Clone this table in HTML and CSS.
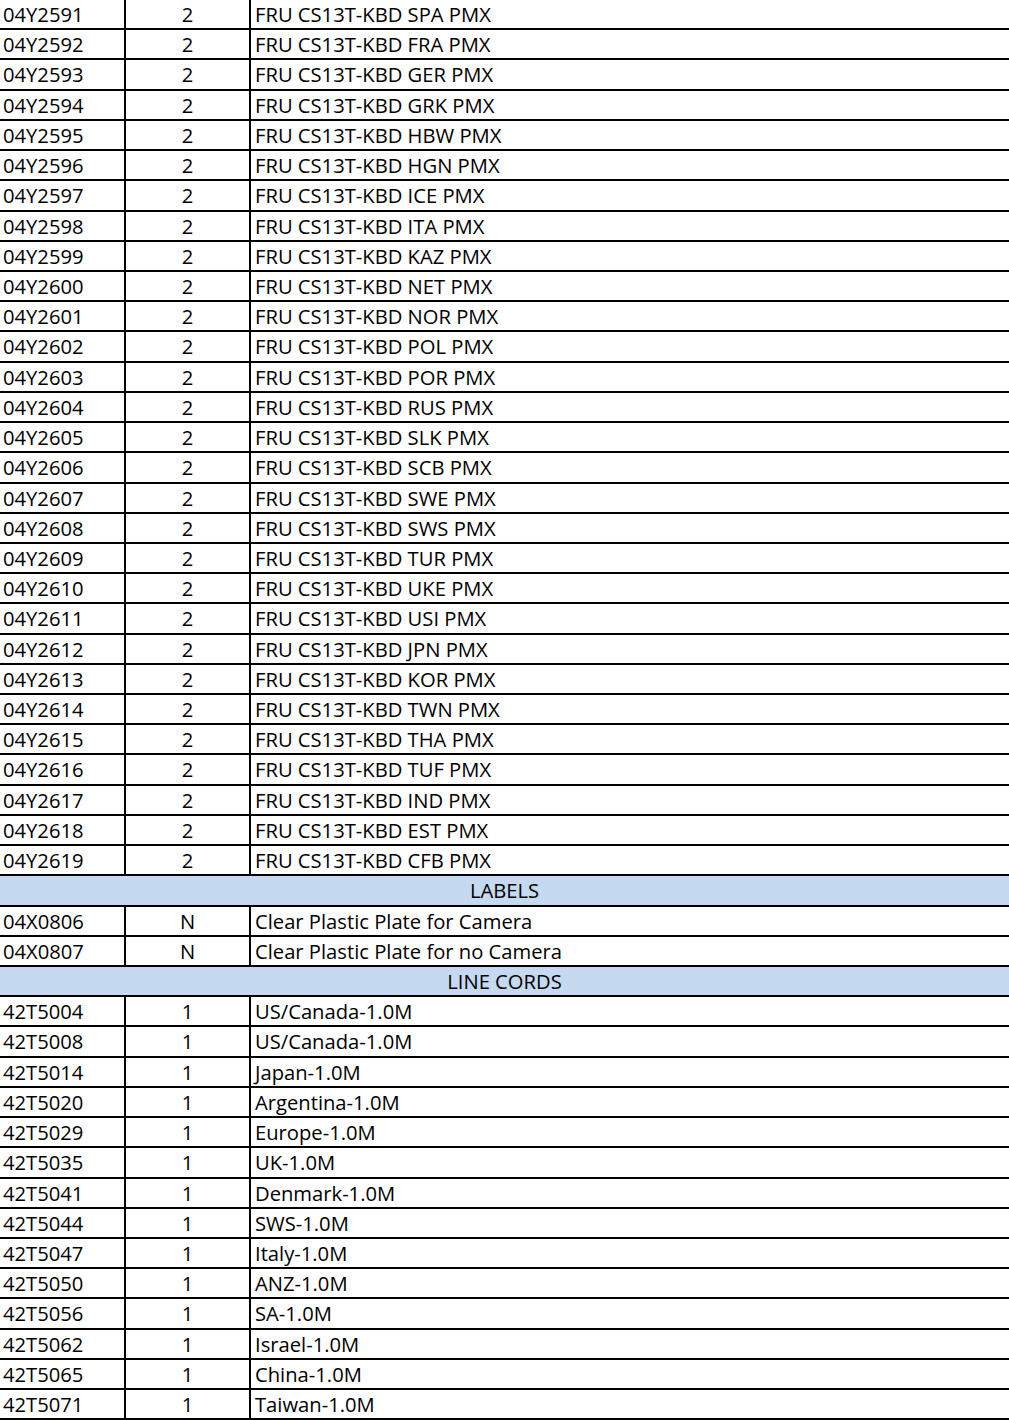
FILE: index.html
```html
<!DOCTYPE html>
<html>
<head>
<meta charset="utf-8">
<link rel="stylesheet" href="styles.css">
</head>
<body>
<div class="sheet">
  <div class="row"><div class="c1">04Y2591</div><div class="c2">2</div><div class="c3">FRU CS13T-KBD SPA PMX</div></div>
  <div class="row"><div class="c1">04Y2592</div><div class="c2">2</div><div class="c3">FRU CS13T-KBD FRA PMX</div></div>
  <div class="row"><div class="c1">04Y2593</div><div class="c2">2</div><div class="c3">FRU CS13T-KBD GER PMX</div></div>
  <div class="row"><div class="c1">04Y2594</div><div class="c2">2</div><div class="c3">FRU CS13T-KBD GRK PMX</div></div>
  <div class="row"><div class="c1">04Y2595</div><div class="c2">2</div><div class="c3">FRU CS13T-KBD HBW PMX</div></div>
  <div class="row"><div class="c1">04Y2596</div><div class="c2">2</div><div class="c3">FRU CS13T-KBD HGN PMX</div></div>
  <div class="row"><div class="c1">04Y2597</div><div class="c2">2</div><div class="c3">FRU CS13T-KBD ICE PMX</div></div>
  <div class="row"><div class="c1">04Y2598</div><div class="c2">2</div><div class="c3">FRU CS13T-KBD ITA PMX</div></div>
  <div class="row"><div class="c1">04Y2599</div><div class="c2">2</div><div class="c3">FRU CS13T-KBD KAZ PMX</div></div>
  <div class="row"><div class="c1">04Y2600</div><div class="c2">2</div><div class="c3">FRU CS13T-KBD NET PMX</div></div>
  <div class="row"><div class="c1">04Y2601</div><div class="c2">2</div><div class="c3">FRU CS13T-KBD NOR PMX</div></div>
  <div class="row"><div class="c1">04Y2602</div><div class="c2">2</div><div class="c3">FRU CS13T-KBD POL PMX</div></div>
  <div class="row"><div class="c1">04Y2603</div><div class="c2">2</div><div class="c3">FRU CS13T-KBD POR PMX</div></div>
  <div class="row"><div class="c1">04Y2604</div><div class="c2">2</div><div class="c3">FRU CS13T-KBD RUS PMX</div></div>
  <div class="row"><div class="c1">04Y2605</div><div class="c2">2</div><div class="c3">FRU CS13T-KBD SLK PMX</div></div>
  <div class="row"><div class="c1">04Y2606</div><div class="c2">2</div><div class="c3">FRU CS13T-KBD SCB PMX</div></div>
  <div class="row"><div class="c1">04Y2607</div><div class="c2">2</div><div class="c3">FRU CS13T-KBD SWE PMX</div></div>
  <div class="row"><div class="c1">04Y2608</div><div class="c2">2</div><div class="c3">FRU CS13T-KBD SWS PMX</div></div>
  <div class="row"><div class="c1">04Y2609</div><div class="c2">2</div><div class="c3">FRU CS13T-KBD TUR PMX</div></div>
  <div class="row"><div class="c1">04Y2610</div><div class="c2">2</div><div class="c3">FRU CS13T-KBD UKE PMX</div></div>
  <div class="row"><div class="c1">04Y2611</div><div class="c2">2</div><div class="c3">FRU CS13T-KBD USI PMX</div></div>
  <div class="row"><div class="c1">04Y2612</div><div class="c2">2</div><div class="c3">FRU CS13T-KBD JPN PMX</div></div>
  <div class="row"><div class="c1">04Y2613</div><div class="c2">2</div><div class="c3">FRU CS13T-KBD KOR PMX</div></div>
  <div class="row"><div class="c1">04Y2614</div><div class="c2">2</div><div class="c3">FRU CS13T-KBD TWN PMX</div></div>
  <div class="row"><div class="c1">04Y2615</div><div class="c2">2</div><div class="c3">FRU CS13T-KBD THA PMX</div></div>
  <div class="row"><div class="c1">04Y2616</div><div class="c2">2</div><div class="c3">FRU CS13T-KBD TUF PMX</div></div>
  <div class="row"><div class="c1">04Y2617</div><div class="c2">2</div><div class="c3">FRU CS13T-KBD IND PMX</div></div>
  <div class="row"><div class="c1">04Y2618</div><div class="c2">2</div><div class="c3">FRU CS13T-KBD EST PMX</div></div>
  <div class="row"><div class="c1">04Y2619</div><div class="c2">2</div><div class="c3">FRU CS13T-KBD CFB PMX</div></div>
  <div class="row head">LABELS</div>
  <div class="row"><div class="c1">04X0806</div><div class="c2">N</div><div class="c3">Clear Plastic Plate for Camera</div></div>
  <div class="row"><div class="c1">04X0807</div><div class="c2">N</div><div class="c3">Clear Plastic Plate for no Camera</div></div>
  <div class="row head">LINE CORDS</div>
  <div class="row"><div class="c1">42T5004</div><div class="c2">1</div><div class="c3">US/Canada-1.0M</div></div>
  <div class="row"><div class="c1">42T5008</div><div class="c2">1</div><div class="c3">US/Canada-1.0M</div></div>
  <div class="row"><div class="c1">42T5014</div><div class="c2">1</div><div class="c3">Japan-1.0M</div></div>
  <div class="row"><div class="c1">42T5020</div><div class="c2">1</div><div class="c3">Argentina-1.0M</div></div>
  <div class="row"><div class="c1">42T5029</div><div class="c2">1</div><div class="c3">Europe-1.0M</div></div>
  <div class="row"><div class="c1">42T5035</div><div class="c2">1</div><div class="c3">UK-1.0M</div></div>
  <div class="row"><div class="c1">42T5041</div><div class="c2">1</div><div class="c3">Denmark-1.0M</div></div>
  <div class="row"><div class="c1">42T5044</div><div class="c2">1</div><div class="c3">SWS-1.0M</div></div>
  <div class="row"><div class="c1">42T5047</div><div class="c2">1</div><div class="c3">Italy-1.0M</div></div>
  <div class="row"><div class="c1">42T5050</div><div class="c2">1</div><div class="c3">ANZ-1.0M</div></div>
  <div class="row"><div class="c1">42T5056</div><div class="c2">1</div><div class="c3">SA-1.0M</div></div>
  <div class="row"><div class="c1">42T5062</div><div class="c2">1</div><div class="c3">Israel-1.0M</div></div>
  <div class="row"><div class="c1">42T5065</div><div class="c2">1</div><div class="c3">China-1.0M</div></div>
  <div class="row"><div class="c1">42T5071</div><div class="c2">1</div><div class="c3">Taiwan-1.0M</div></div>
</div>
</body>
</html>
```
FILE: styles.css
```css
html, body {
  margin: 0;
  padding: 0;
  background: #ffffff;
}
body {
  font-family: "Open Sans", "Noto Sans", sans-serif;
  font-size: 20.2px;
  color: #000000;
  overflow: hidden;
}
.sheet {
  width: 1009px;
}
.row {
  display: grid;
  grid-template-columns: 126px 125px 1fr;
  height: 30.22px;
  box-sizing: border-box;
  border-bottom: 2px solid #000000;
  line-height: 28px;
  white-space: nowrap;
}
.c1, .c2, .c3 {
  overflow: hidden;
}
.c1 {
  padding-left: 3px;
  border-right: 2px solid #000000;
}
.c2 {
  text-align: center;
  border-right: 2px solid #000000;
}
.c3 {
  padding-left: 4px;
}
.head {
  display: block;
  background: #c5d9f1;
  text-align: center;
}
```
